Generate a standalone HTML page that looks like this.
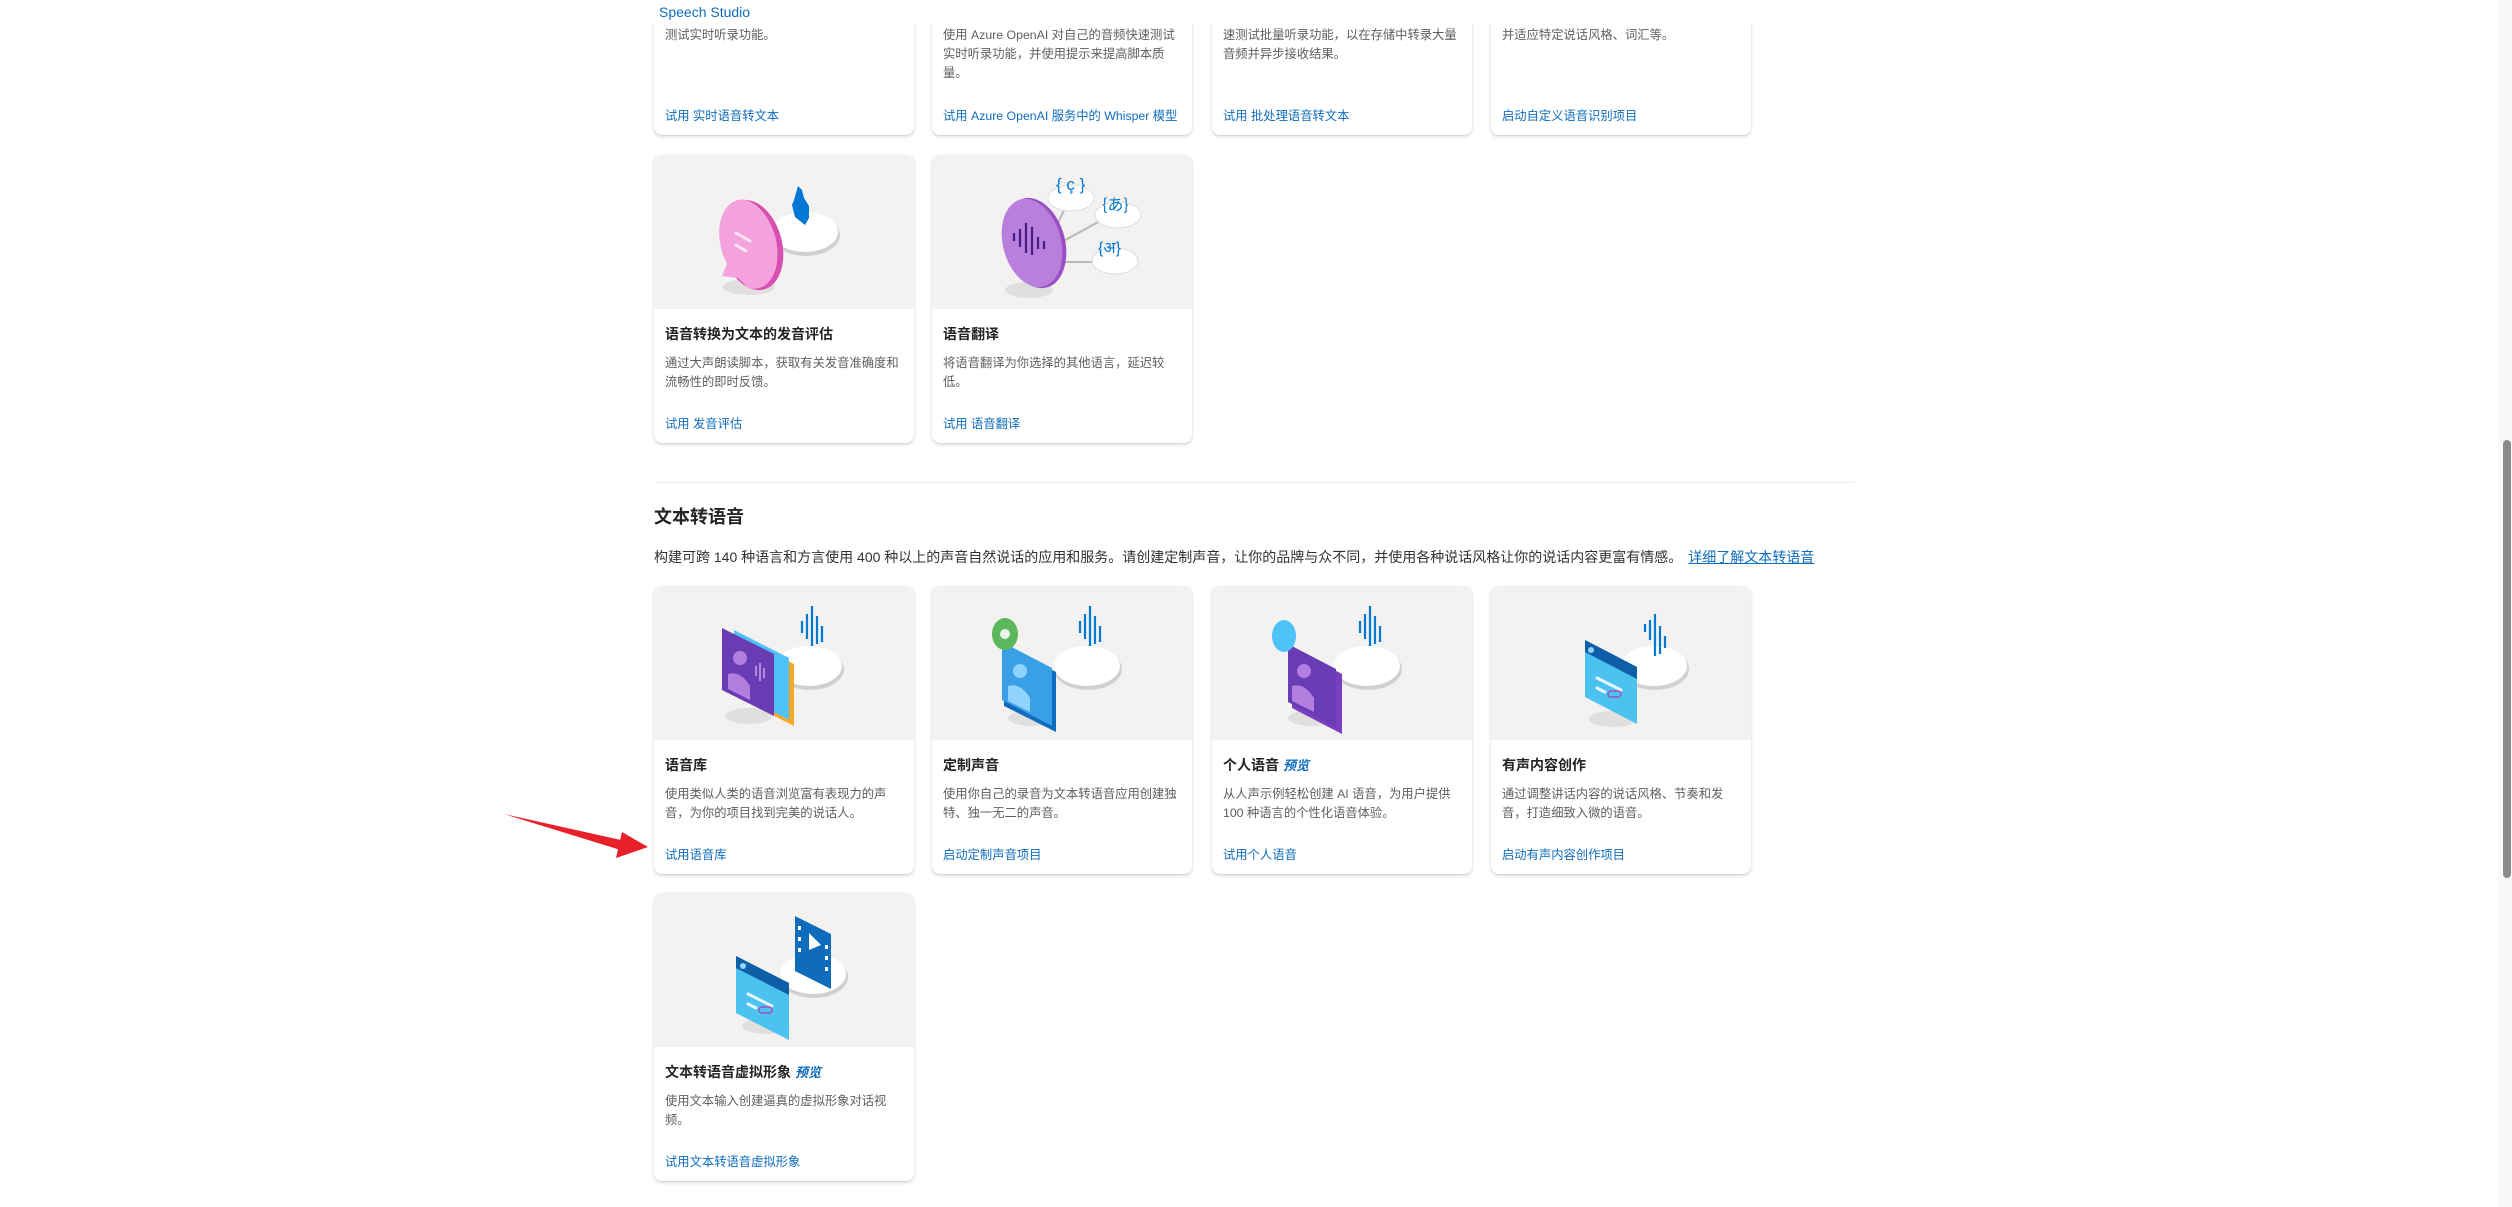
<!DOCTYPE html>
<html><head><meta charset="utf-8">
<style>
*{margin:0;padding:0;box-sizing:border-box}
body{width:2512px;height:1207px;overflow:hidden;background:#fff;position:relative;font-family:"Liberation Sans","Noto Sans CJK SC",sans-serif;color:#323130}
.hdr{position:absolute;left:0;top:0;width:2497px;height:24px;background:#fff;z-index:5}
.hdr span{position:absolute;left:659px;top:4px;font-size:14px;color:#0f6cbd}
.card{position:absolute;width:260px;height:288px;background:#fff;border-radius:8px;box-shadow:0 1.6px 3.6px rgba(0,0,0,.14),0 .3px .9px rgba(0,0,0,.11);overflow:hidden}
.img{position:absolute;left:0;top:0;width:260px;height:154px;background:#f3f2f1}
.img svg{position:absolute;left:0;top:0}
.t{position:absolute;left:11px;top:169px;font-size:14px;font-weight:bold;color:#242424;white-space:nowrap}
.t i{color:#0f6cbd;font-size:13px;margin-left:4px}
.d{position:absolute;left:11px;top:199px;width:242px;font-size:12.3px;line-height:19px;color:#605e5c}
.l{position:absolute;left:11px;top:259px;font-size:12.3px;color:#0f6cbd;white-space:nowrap}
.sec{position:absolute;left:654px;top:503px;font-size:18px;font-weight:bold;color:#242424}
.sd{position:absolute;left:654px;top:547px;font-size:14px;color:#323130;white-space:nowrap}
.sd a{color:#0f6cbd;text-decoration:underline;margin-left:6px}
.div{position:absolute;left:654px;top:482px;width:1200px;height:1px;background:#edebe9}
.sb{position:absolute;left:2498px;top:0;width:14px;height:1207px;background:#f9f9f9}
.th{position:absolute;left:2503px;top:440px;width:8px;height:438px;background:#8b8b8b;border-radius:4px}
</style></head><body>
<div class="hdr"><span>Speech Studio</span></div>

<!-- row 1 (scrolled) -->
<div class="card" style="left:654px;top:-153px"><div class="d" style="top:179px">测试实时听录功能。</div><div class="l">试用 实时语音转文本</div></div>
<div class="card" style="left:932px;top:-153px"><div class="d" style="top:179px">使用 Azure OpenAI 对自己的音频快速测试实时听录功能，并使用提示来提高脚本质量。</div><div class="l">试用 Azure OpenAI 服务中的 Whisper 模型</div></div>
<div class="card" style="left:1212px;top:-153px"><div class="d" style="top:179px">速测试批量听录功能，以在存储中转录大量音频并异步接收结果。</div><div class="l">试用 批处理语音转文本</div></div>
<div class="card" style="left:1491px;top:-153px"><div class="d" style="top:179px">并适应特定说话风格、词汇等。</div><div class="l">启动自定义语音识别项目</div></div>

<!-- row 2 -->
<div class="card" style="left:654px;top:155px"><div class="img"><svg width="260" height="154">
<ellipse cx="95" cy="132" rx="26" ry="8" fill="#d8d7d6" opacity=".7"/>
<ellipse cx="152" cy="80" rx="34" ry="21" fill="#d0d0d0"/><ellipse cx="151" cy="77" rx="33" ry="20" fill="#fff"/>
<path d="M140 45 l4 -14 4 4 l2 8 5 8 0 12 -4 7 -10 -8 -3 -12z" fill="#0078d4"/>
<ellipse cx="98" cy="90" rx="30" ry="46" transform="rotate(-15 98 90)" fill="#d84fb1"/>
<path d="M92 45 a28 44 -15 1 1 2 88 l-10 -10 -16 -2 5 -12 a28 44 -15 0 1 19 -64z" fill="#f3a2de"/>
<path d="M82 78 l14 8 M82 90 l10 6" stroke="#fbe4f5" stroke-width="3" stroke-linecap="round"/></svg></div>
<div class="t">语音转换为文本的发音评估</div><div class="d">通过大声朗读脚本，获取有关发音准确度和流畅性的即时反馈。</div><div class="l">试用 发音评估</div></div>

<div class="card" style="left:932px;top:155px"><div class="img"><svg width="260" height="154">
<ellipse cx="97" cy="135" rx="24" ry="8" fill="#d8d7d6" opacity=".7"/>
<path d="M125 70 l12 -25 M128 88 l40 -22 M130 107 l40 0" stroke="#b8b8b8" stroke-width="2"/>
<ellipse cx="139" cy="43" rx="23" ry="13" fill="#fff" stroke="#ddd"/><ellipse cx="186" cy="60" rx="23" ry="13" fill="#fff" stroke="#ddd"/><ellipse cx="183" cy="106" rx="23" ry="13" fill="#fff" stroke="#ddd"/>
<text x="124" y="35" font-size="17" fill="#0078d4" font-family="Liberation Sans">{ ç }</text>
<text x="170" y="55" font-size="16" fill="#0078d4" font-family="Noto Sans CJK JP">{あ}</text>
<text x="166" y="98" font-size="16" fill="#0078d4" font-family="Liberation Sans">{अ}</text>
<ellipse cx="103" cy="88" rx="30" ry="46" transform="rotate(-15 103 88)" fill="#9b4fc5"/>
<ellipse cx="100" cy="88" rx="29" ry="45" transform="rotate(-15 100 88)" fill="#b880dc"/>
<path d="M82 78v8 M88 74v18 M94 68v30 M100 72v28 M106 82v12 M112 86v8" stroke="#4a1a84" stroke-width="2.2"/></svg></div>
<div class="t">语音翻译</div><div class="d">将语音翻译为你选择的其他语言，延迟较低。</div><div class="l">试用 语音翻译</div></div>

<div class="div"></div>
<div class="sec">文本转语音</div>
<div class="sd">构建可跨 140 种语言和方言使用 400 种以上的声音自然说话的应用和服务。请创建定制声音，让你的品牌与众不同，并使用各种说话风格让你的说话内容更富有情感。<a>详细了解文本转语音</a></div>

<!-- row 3 -->
<div class="card" style="left:654px;top:586px"><div class="img"><svg width="260" height="154">
<ellipse cx="95" cy="130" rx="24" ry="8" fill="#d8d7d6" opacity=".7"/>
<ellipse cx="156" cy="83" rx="34" ry="21" fill="#d0d0d0"/><ellipse cx="155" cy="80" rx="33" ry="20" fill="#fff"/>
<path d="M148 35v12 M153 28v25 M158 20v40 M163 30v28 M168 40v16" stroke="#0078d4" stroke-width="2.2"/>
<path d="M85 50 l55 28 v62 l-55 -28z" fill="#ffa726"/>
<path d="M80 44 l55 28 v62 l-55 -28z" fill="#4fc3f7"/>
<path d="M68 42 l52 26 v62 l-52 -26z" fill="#6a3cb4"/>
<circle cx="86" cy="72" r="7" fill="#b27fe0"/><path d="M74 88 q12 -4 22 12 v14 l-22 -11z" fill="#b27fe0"/>
<path d="M102 80v10 M106 77v18 M110 82v10" stroke="#c9a7f0" stroke-width="1.5"/></svg></div>
<div class="t">语音库</div><div class="d">使用类似人类的语音浏览富有表现力的声音，为你的项目找到完美的说话人。</div><div class="l">试用语音库</div></div>

<div class="card" style="left:932px;top:586px"><div class="img"><svg width="260" height="154">
<ellipse cx="100" cy="132" rx="24" ry="8" fill="#d8d7d6" opacity=".7"/>
<ellipse cx="156" cy="83" rx="34" ry="21" fill="#d0d0d0"/><ellipse cx="155" cy="80" rx="33" ry="20" fill="#fff"/>
<path d="M148 35v12 M153 28v25 M158 20v40 M163 30v28 M168 40v16" stroke="#0078d4" stroke-width="2.2"/>
<path d="M72 60 l52 26 v60 l-52 -26z" fill="#0f6cbd"/>
<path d="M70 56 l50 26 v58 l-50 -26z" fill="#3aa0e6"/>
<circle cx="88" cy="85" r="7" fill="#8fd3ff"/><path d="M76 100 q12 -4 22 12 v14 l-22 -11z" fill="#8fd3ff"/>
<ellipse cx="73" cy="48" rx="13" ry="16" fill="#5cb85c"/><circle cx="73" cy="48" r="5" fill="#e8f5e9"/></svg></div>
<div class="t">定制声音</div><div class="d">使用你自己的录音为文本转语音应用创建独特、独一无二的声音。</div><div class="l">启动定制声音项目</div></div>

<div class="card" style="left:1212px;top:586px"><div class="img"><svg width="260" height="154">
<ellipse cx="100" cy="132" rx="24" ry="8" fill="#d8d7d6" opacity=".7"/>
<ellipse cx="156" cy="83" rx="34" ry="21" fill="#d0d0d0"/><ellipse cx="155" cy="80" rx="33" ry="20" fill="#fff"/>
<path d="M148 35v12 M153 28v25 M158 20v40 M163 30v28 M168 40v16" stroke="#0078d4" stroke-width="2.2"/>
<path d="M80 62 l50 26 v60 l-50 -26z" fill="#7a3fc1"/>
<path d="M76 58 l48 25 v58 l-48 -25z" fill="#6a3cb4"/>
<circle cx="92" cy="85" r="7" fill="#b27fe0"/><path d="M80 100 q12 -4 22 12 v14 l-22 -11z" fill="#b27fe0"/>
<ellipse cx="72" cy="50" rx="12" ry="16" fill="#4fc3f7"/></svg></div>
<div class="t">个人语音<i>预览</i></div><div class="d">从人声示例轻松创建 AI 语音，为用户提供 100 种语言的个性化语音体验。</div><div class="l">试用个人语音</div></div>

<div class="card" style="left:1491px;top:586px"><div class="img"><svg width="260" height="154">
<ellipse cx="122" cy="133" rx="24" ry="8" fill="#d8d7d6" opacity=".7"/>
<ellipse cx="164" cy="83" rx="34" ry="21" fill="#d0d0d0"/><ellipse cx="163" cy="80" rx="33" ry="20" fill="#fff"/>
<path d="M154 38v8 M159 34v20 M164 28v42 M169 40v28 M174 50v12" stroke="#0078d4" stroke-width="2.2"/>
<path d="M94 54 l52 27 v57 l-52 -27z" fill="#4cc2f0"/>
<path d="M94 54 l52 27 v12 l-52 -27z" fill="#0f5fa8"/>
<circle cx="100" cy="64" r="3" fill="#8fd3ff"/>
<path d="M106 92 l24 12 M106 102 l8 4" stroke="#e6f6ff" stroke-width="3" stroke-linecap="round"/>
<rect x="117" y="105" width="13" height="6" rx="3" fill="none" stroke="#a34fc1" stroke-width="1.5"/></svg></div>
<div class="t">有声内容创作</div><div class="d">通过调整讲话内容的说话风格、节奏和发音，打造细致入微的语音。</div><div class="l">启动有声内容创作项目</div></div>

<!-- row 4 -->
<div class="card" style="left:654px;top:893px"><div class="img"><svg width="260" height="154">
<ellipse cx="112" cy="133" rx="24" ry="8" fill="#d8d7d6" opacity=".7"/>
<ellipse cx="160" cy="84" rx="34" ry="21" fill="#d0d0d0"/><ellipse cx="159" cy="81" rx="33" ry="20" fill="#fff"/>
<path d="M141 23 l36 18 v55 l-36 -18z" fill="#0f6cbd"/>
<path d="M155 40 l12 12 -12 5z" fill="#fff"/>
<g fill="#fff"><rect x="144" y="33" width="3" height="4"/><rect x="144" y="44" width="3" height="4"/><rect x="144" y="55" width="3" height="4"/><rect x="171" y="52" width="3" height="4"/><rect x="171" y="63" width="3" height="4"/><rect x="171" y="74" width="3" height="4"/></g>
<path d="M82 63 l53 27 v57 l-53 -27z" fill="#4cc2f0"/>
<path d="M82 63 l53 27 v12 l-53 -27z" fill="#0f5fa8"/>
<circle cx="89" cy="73" r="3" fill="#8fd3ff"/>
<path d="M94 101 l24 12 M94 111 l8 4" stroke="#e6f6ff" stroke-width="3" stroke-linecap="round"/>
<rect x="105" y="114" width="13" height="6" rx="3" fill="none" stroke="#a34fc1" stroke-width="1.5"/></svg></div>
<div class="t">文本转语音虚拟形象<i>预览</i></div><div class="d">使用文本输入创建逼真的虚拟形象对话视频。</div><div class="l">试用文本转语音虚拟形象</div></div>

<svg style="position:absolute;left:0;top:0" width="700" height="900">
<path d="M504 814 L630 842 L627 852 Z" fill="#e8202a"/>
<path d="M648 847 L622 832 L616 858 Z" fill="#e8202a"/>
</svg>

<div class="sb"></div><div class="th"></div>
</body></html>
